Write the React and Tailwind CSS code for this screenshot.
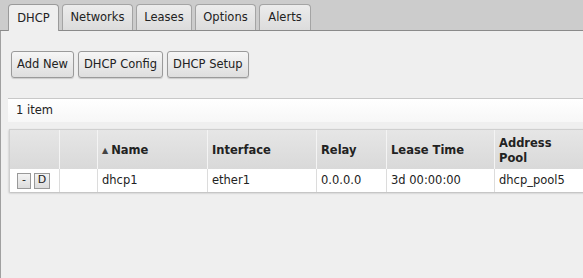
const tabs = [
  { label: "DHCP", w: "w-[51px]", active: true },
  { label: "Networks", w: "w-[71px]" },
  { label: "Leases", w: "w-[56px]" },
  { label: "Options", w: "w-[61px]" },
  { label: "Alerts", w: "w-[52px]" },
];

const cols = [
  { label: "", w: "w-[50px]" },
  { label: "", w: "w-[38px]" },
  { label: "Name", w: "w-[110px]", sort: true },
  { label: "Interface", w: "w-[109px]" },
  { label: "Relay", w: "w-[70px]" },
  { label: "Lease Time", w: "w-[108px]" },
  { label: "Address Pool", w: "w-[100px]" },
];

const row = ["", "", "dhcp1", "ether1", "0.0.0.0", "3d 00:00:00", "dhcp_pool5"];

function Btn({ children }) {
  return (
    <button className="h-[27px] px-[5px] rounded-[3px] border border-[#9a9a9a] bg-gradient-to-b from-[#f6f6f6] to-[#dedede] text-[#222] shadow-[0_1px_1px_rgba(0,0,0,0.15)]">
      {children}
    </button>
  );
}

export default function App() {
  return (
    <div
      className="w-[583px] h-[278px] overflow-hidden bg-[#efefef] text-[11.5px] text-[#222]"
      style={{ fontFamily: '"DejaVu Sans", Verdana, sans-serif' }}
    >
      <div className="h-[31px] bg-[#cccccc] border-b border-[#8a8a8a] flex items-end pl-[8px] gap-[3px]">
        {tabs.map((t) => (
          <div
            key={t.label}
            className={
              t.active
                ? `${t.w} h-[27px] -mb-px rounded-t-[4px] border border-b-0 border-[#9a9a9a] bg-[#efefef] flex items-center justify-center pt-[1px]`
                : `${t.w} h-[26px] rounded-t-[4px] border border-b-0 border-[#a4a4a4] bg-gradient-to-b from-[#ececec] to-[#dcdcdc] flex items-center justify-center pt-[1px]`
            }
          >
            {t.label}
          </div>
        ))}
      </div>
      <div className="h-[247px] border-l border-[#a0a0a0] flex flex-col">
        <div className="flex gap-[4px] pl-[10px] mt-[20px]">
          <Btn>Add New</Btn>
          <Btn>DHCP Config</Btn>
          <Btn>DHCP Setup</Btn>
        </div>
        <div className="mt-[20px] ml-[7px] h-[24px] bg-gradient-to-b from-white to-[#f7f7f7] border-t border-[#c8c8c8] flex items-center pl-[8px]">
          1 item
        </div>
        <div className="mt-[7px] ml-[8px] w-[700px] shadow-[0_1px_2px_rgba(0,0,0,0.25)]">
          <div className="flex h-[40px] bg-gradient-to-b from-[#e6e6e6] to-[#d9d9d9] border-t border-l border-[#cfcfcf]">
            {cols.map((c, i) => (
              <div
                key={i}
                className={`${c.w} shrink-0 border-r border-[#f4f4f4] flex items-center pl-[4px] pt-[2px] font-bold leading-[15px]`}
              >
                {c.sort && <span className="text-[8px] text-[#444] mr-[3px] font-normal">▲</span>}
                {c.label === "Address Pool" ? (
                  <span>
                    Address
                    <br />
                    Pool
                  </span>
                ) : (
                  c.label
                )}
              </div>
            ))}
          </div>
          <div className="flex h-[23px] bg-white border-l border-[#cfcfcf]">
            {row.map((v, i) => (
              <div
                key={i}
                className={`${cols[i].w} shrink-0 border-r border-[#dcdcdc] flex items-center pl-[4px]`}
              >
                {i === 0 ? (
                  <div className="flex gap-[3px] pl-[3px]">
                    <span className="w-[14px] h-[16px] border border-[#999] bg-gradient-to-b from-[#f4f4f4] to-[#dcdcdc] flex items-center justify-center text-[11px]">
                      -
                    </span>
                    <span className="w-[16px] h-[16px] border border-[#999] bg-gradient-to-b from-[#f4f4f4] to-[#dcdcdc] flex items-center justify-center text-[11px]">
                      D
                    </span>
                  </div>
                ) : (
                  v
                )}
              </div>
            ))}
          </div>
        </div>
      </div>
    </div>
  );
}
